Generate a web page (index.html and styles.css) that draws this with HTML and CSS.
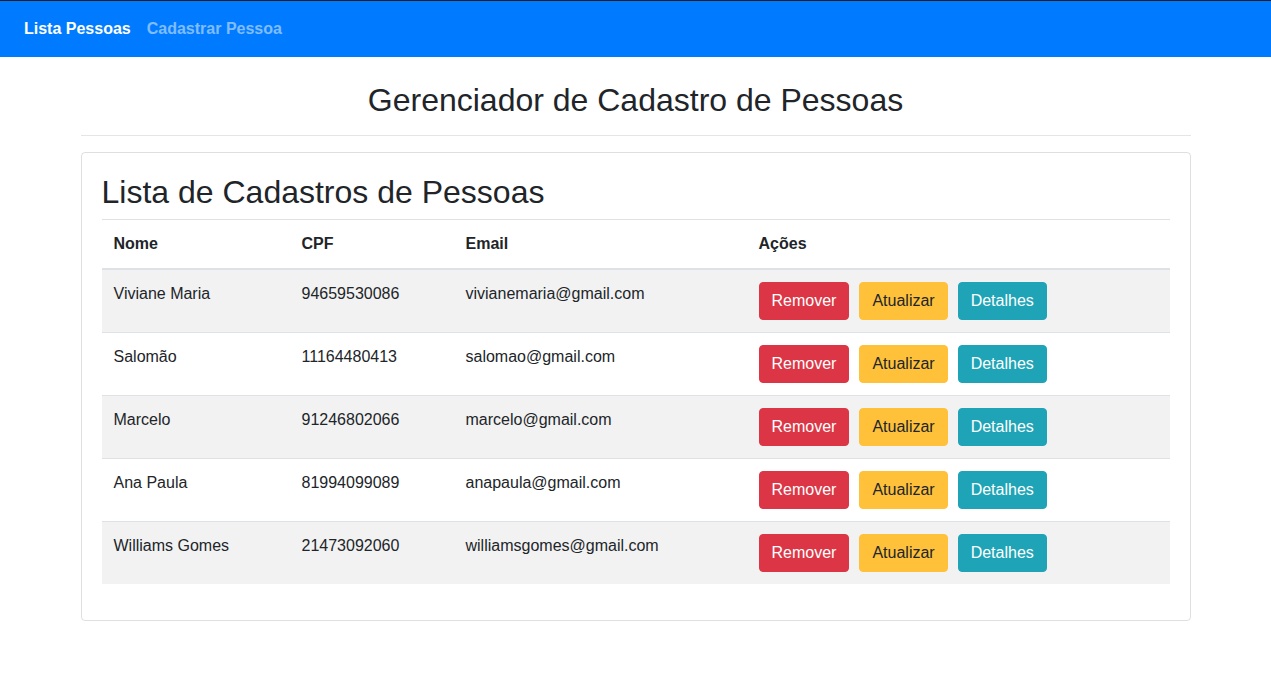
FILE: index.html
```html
<!DOCTYPE html>
<html lang="pt-BR">
<head>
<meta charset="utf-8">
<title>Gerenciador de Cadastro de Pessoas</title>
<link rel="stylesheet" href="styles.css">
</head>
<body>
<nav class="navbar">
  <a class="nav-link active" href="#">Lista Pessoas</a>
  <a class="nav-link" href="#">Cadastrar Pessoa</a>
</nav>
<main class="container">
  <header class="page-header">
    <h2 class="page-title">Gerenciador de Cadastro de Pessoas</h2>
    <hr class="divider">
  </header>
  <section class="card">
    <div class="card-body">
      <h2 class="card-title">Lista de Cadastros de Pessoas</h2>
      <table class="table">
        <thead>
          <tr>
            <th class="col-nome">Nome</th>
            <th class="col-cpf">CPF</th>
            <th class="col-email">Email</th>
            <th class="col-acoes">Ações</th>
          </tr>
        </thead>
        <tbody>
          <tr class="striped">
            <td>Viviane Maria</td><td>94659530086</td><td>vivianemaria@gmail.com</td>
            <td><div class="actions"><button class="btn btn-danger">Remover</button><button class="btn btn-warning">Atualizar</button><button class="btn btn-info">Detalhes</button></div></td>
          </tr>
          <tr>
            <td>Salomão</td><td>11164480413</td><td>salomao@gmail.com</td>
            <td><div class="actions"><button class="btn btn-danger">Remover</button><button class="btn btn-warning">Atualizar</button><button class="btn btn-info">Detalhes</button></div></td>
          </tr>
          <tr class="striped">
            <td>Marcelo</td><td>91246802066</td><td>marcelo@gmail.com</td>
            <td><div class="actions"><button class="btn btn-danger">Remover</button><button class="btn btn-warning">Atualizar</button><button class="btn btn-info">Detalhes</button></div></td>
          </tr>
          <tr>
            <td>Ana Paula</td><td>81994099089</td><td>anapaula@gmail.com</td>
            <td><div class="actions"><button class="btn btn-danger">Remover</button><button class="btn btn-warning">Atualizar</button><button class="btn btn-info">Detalhes</button></div></td>
          </tr>
          <tr class="striped">
            <td>Williams Gomes</td><td>21473092060</td><td>williamsgomes@gmail.com</td>
            <td><div class="actions"><button class="btn btn-danger">Remover</button><button class="btn btn-warning">Atualizar</button><button class="btn btn-info">Detalhes</button></div></td>
          </tr>
        </tbody>
      </table>
    </div>
  </section>
</main>
</body>
</html>
```
FILE: styles.css
```css
* { box-sizing: border-box; }
html, body {
  margin: 0;
  padding: 0;
  background: #fff;
  color: #212529;
  font-family: "Liberation Sans", Arial, sans-serif;
  font-size: 16px;
  line-height: 1.5;
}
.navbar {
  display: flex;
  align-items: center;
  height: 57px;
  padding: 0 16px;
  background: #007bff;
  border-top: 1px solid #1d1d1d;
}
.nav-link {
  padding: 8px;
  font-weight: 700;
  text-decoration: none;
  color: rgba(255, 255, 255, 0.5);
  line-height: 24px;
}
.nav-link.active { color: #fff; }
.container {
  width: 1110px;
  margin: 0 auto;
}
.page-header { padding-top: 24px; }
.page-title {
  margin: 0;
  text-align: center;
  font-size: 32px;
  font-weight: 400;
  line-height: 1.2;
}
.divider {
  margin: 16px 0;
  border: 0;
  border-top: 1px solid rgba(0, 0, 0, 0.1);
}
.card {
  border: 1px solid rgba(0, 0, 0, 0.125);
  border-radius: 4px;
}
.card-body { padding: 20px; }
.card-title {
  margin: 0 0 7px;
  font-size: 32px;
  font-weight: 400;
  line-height: 1.2;
}
.table {
  width: 100%;
  margin-bottom: 16px;
  border-collapse: collapse;
}
.table th, .table td {
  padding: 12px;
  vertical-align: top;
  text-align: left;
  border-top: 1px solid #dee2e6;
}
.table thead th {
  vertical-align: bottom;
  border-bottom: 2px solid #dee2e6;
  font-weight: 700;
}
.col-nome { width: 188px; }
.col-cpf { width: 164px; }
.col-email { width: 293px; }
.table tbody tr.striped { background: rgba(0, 0, 0, 0.05); }
.table tbody tr:first-child td { border-top: 0; }
.actions {
  display: flex;
  gap: 10px;
}
.btn {
  font-family: inherit;
  font-size: 16px;
  line-height: 24px;
  padding: 6px 12px;
  border: 1px solid transparent;
  border-radius: 4px;
  cursor: pointer;
}
.btn-danger { background: #dc3545; border-color: #dc3545; color: #fff; }
.btn-warning { background: #ffc13a; border-color: #ffc13a; color: #212529; }
.btn-info { background: #1ea4b6; border-color: #1ea4b6; color: #fff; }
```
